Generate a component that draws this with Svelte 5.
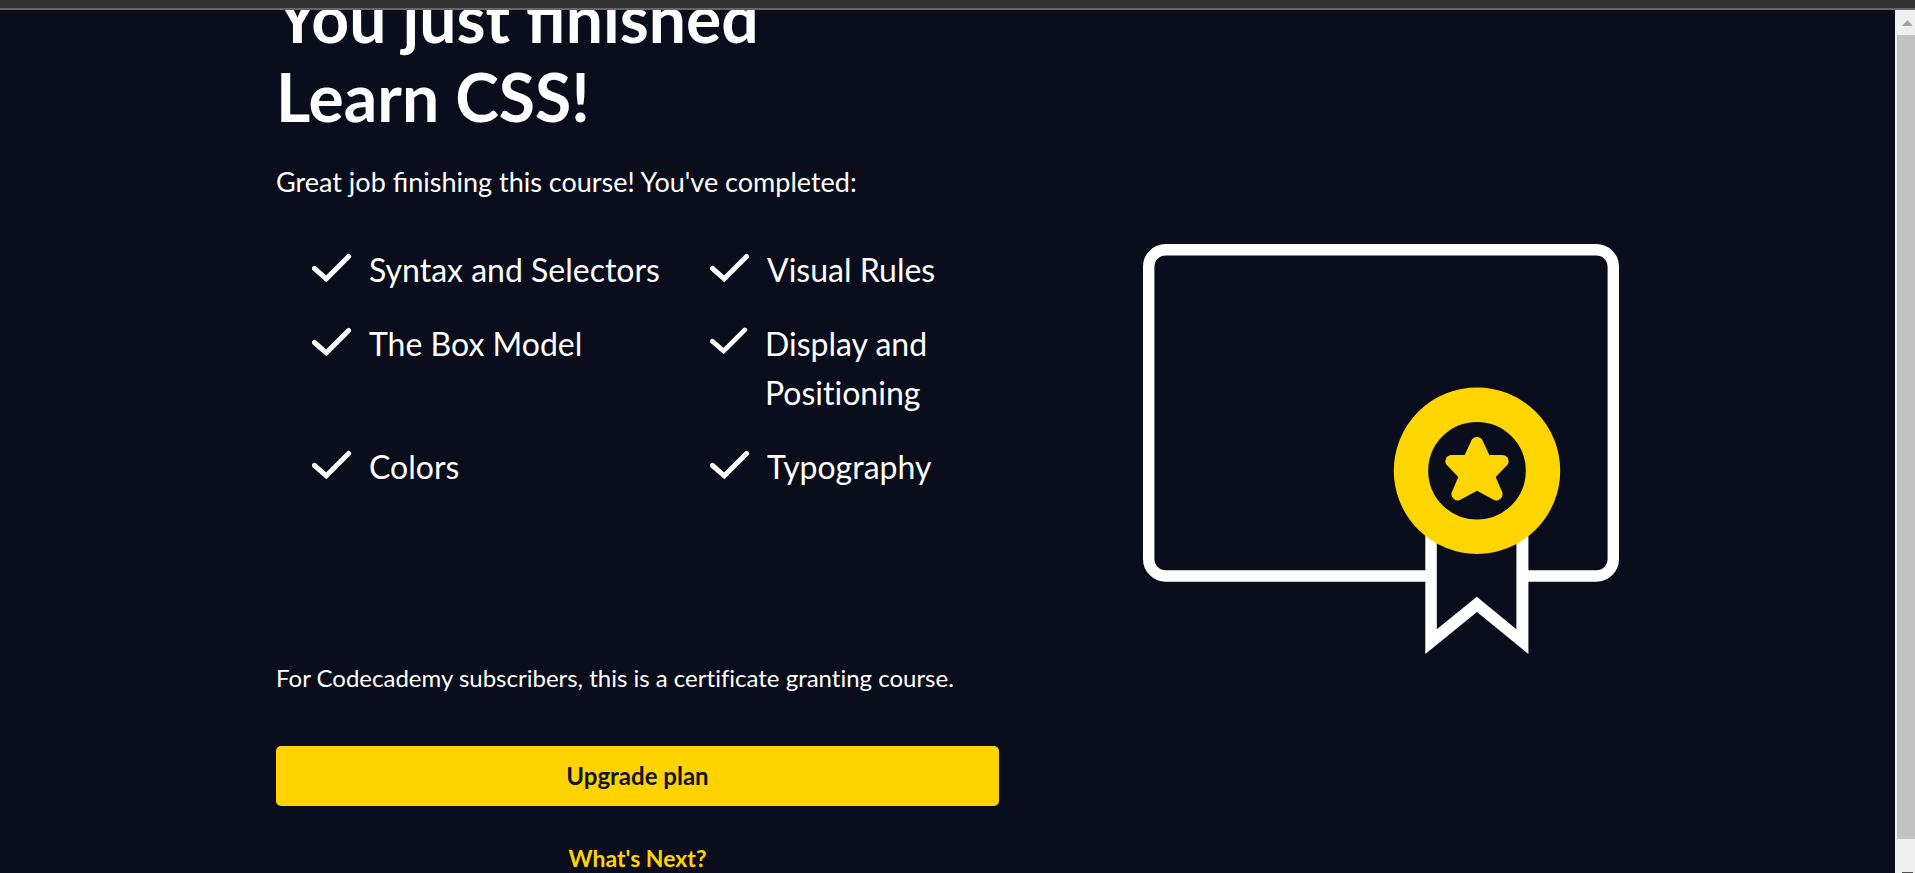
<script>
  const topics = [
    'Syntax and Selectors',
    'Visual Rules',
    'The Box Model',
    'Display and Positioning',
    'Colors',
    'Typography'
  ];
</script>

<div class="window">
  <div class="topbar"></div>
  <div class="viewport">
    <main>
      <div class="content">
        <section class="summary">
          <h1>You just finished<br />Learn CSS!</h1>
          <p class="lead">Great job finishing this course! You've completed:</p>
          <ul>
            {#each topics as topic}
              <li>
                <svg class="check" viewBox="0 0 40 40" aria-hidden="true">
                  <path d="M2.500 23.500 14.300 33.800 36.600 11.500" />
                </svg>
                <span>{topic}</span>
              </li>
            {/each}
          </ul>
          <p class="note">For Codecademy subscribers, this is a certificate granting course.</p>
          <button type="button">Upgrade plan</button>
          <a href="#next">What's Next?</a>
        </section>

        <svg class="certificate" viewBox="0 0 476 411" role="img" aria-label="Certificate">
          <rect x="5.7" y="5.7" width="464.6" height="326.3" rx="17" fill="none" stroke="#fff" stroke-width="11.4" />
          <path fill="#fff" d="M282.3 226V410L334 368 385.4 410V226Z" />
          <path fill="#0a0e1c" d="M293.8 226V385.3L333.8 352.7 373.4 385.3V226Z" />
          <circle cx="334" cy="226.7" r="66" fill="#0a0e1c" stroke="#ffd500" stroke-width="34.4" />
          <path
            fill="#ffd500"
            d="M328.3 196.7A6.3 6.3 0 0 1 339.7 196.7L346.3 211H360A6.2 6.2 0 0 1 364 221.3L352.7 233 358.7 247A6.3 6.3 0 0 1 349.7 255.3L334 246.7 318.3 255.3A6.3 6.3 0 0 1 309.3 247L315.3 233 304 221.3A6.2 6.2 0 0 1 308 211H321.7Z"
          />
        </svg>
      </div>
    </main>
    <div class="scrollbar" aria-hidden="true">
      <svg viewBox="0 0 18 25"><path fill="#a3a3a3" d="M5 16 10.500 10 16 16Z" /></svg>
      <div class="thumb"></div>
      <svg viewBox="0 0 18 34"><path fill="#505050" d="M5 33H16V34H5Z" /></svg>
    </div>
  </div>
</div>

<style>
  :global(body) {
    background: #0a0e1c;
  }
  .window {
    display: flex;
    flex-direction: column;
    height: 100vh;
    overflow: hidden;
    background: #0a0e1c;
    color: #fff;
    font-family: Lato, sans-serif;
  }
  .topbar {
    flex: none;
    height: 8px;
    background: #333;
    border-bottom: 2px solid #666;
  }
  .viewport {
    display: flex;
    flex: 1;
    min-height: 0;
  }
  main {
    flex: 1;
    min-width: 0;
    overflow: hidden;
  }
  .content {
    display: grid;
    grid-template-columns: 723fr 476fr;
    gap: 144px;
    align-items: start;
    max-width: 1343px;
    margin: 0 auto;
  }
  .summary {
    display: flex;
    flex-direction: column;
    margin-top: -32px;
  }
  h1 {
    margin: 0;
    font-size: 66px;
    line-height: 79px;
    font-weight: 700;
  }
  p {
    margin: 0;
  }
  .lead {
    margin-top: 26px;
    font-size: 27px;
    line-height: 40px;
  }
  ul {
    display: grid;
    grid-template-columns: 398fr 289fr;
    row-gap: 25px;
    margin: 43px 0 0;
    padding: 0 0 0 36px;
    list-style: none;
    font-size: 32px;
    line-height: 49px;
    font-variant-ligatures: none;
  }
  li {
    display: flex;
    align-items: flex-start;
    gap: 17px;
    min-width: 0;
  }
  .check {
    width: 40px;
    min-width: 38px;
    fill: none;
    stroke: #fff;
    stroke-width: 5;
    stroke-linecap: round;
  }
  .note {
    margin-top: 169px;
    font-size: 24px;
    line-height: 36px;
    font-variant-ligatures: none;
  }
  button {
    margin-top: 50px;
    padding: 12px;
    border: 0;
    border-radius: 5px;
    background: #ffd300;
    color: #10162f;
    font: 700 24px/36px Lato, sans-serif;
  }
  a {
    align-self: center;
    margin-top: 34px;
    color: #ffd300;
    font-size: 23px;
    line-height: 36px;
    font-weight: 700;
    text-decoration: none;
  }
  .certificate {
    width: 100%;
    margin-top: 234px;
  }
  .scrollbar {
    display: flex;
    flex-direction: column;
    flex: none;
    width: 18px;
    padding-left: 2px;
    background: #f0f0f0;
  }
  .scrollbar svg {
    display: block;
    flex: none;
    width: 18px;
  }
  .thumb {
    flex: 1;
    background: #c1c1c1;
  }
</style>
